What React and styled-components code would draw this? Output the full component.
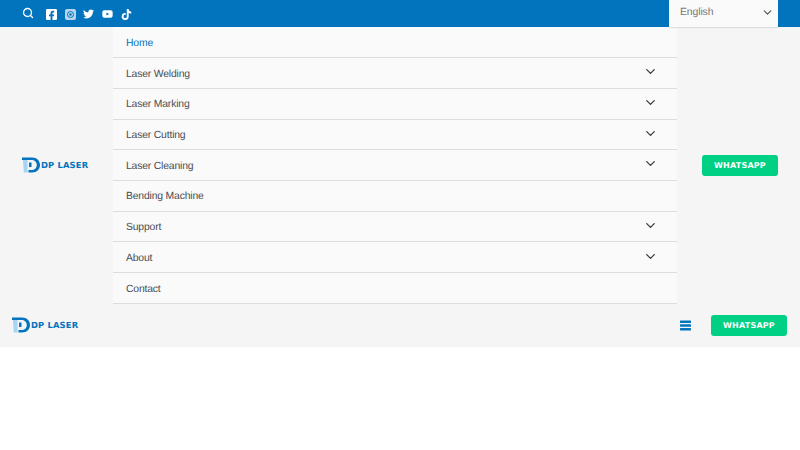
import React from "react";
import styled, { createGlobalStyle } from "styled-components";
import { ChevronDown, Search } from "lucide-react";
import { FaTwitter, FaYoutube, FaTiktok, FaFacebookSquare } from "react-icons/fa";

const Global = createGlobalStyle`
  html, body { margin: 0; padding: 0; background: #fff; }
  body { font-family: "Liberation Sans", Arial, sans-serif; overflow: hidden; text-rendering: geometricPrecision; }
  * { box-sizing: border-box; }
`;
const TopBar = styled.div`
  height: 27px; background: #0274be; display: flex; align-items: center;
  padding: 0 22px; color: #fff; position: relative;
`;
const Icons = styled.div`
  display: flex; align-items: center; gap: 7.7px; margin-left: 12px; height: 100%; padding-top: 1px;
`;
const IconBox = styled.span`
  display: flex; width: 11px; height: 11px; align-items: center; justify-content: center;
`;
const SearchBox = styled.span`display: flex; margin-top: -2px;`;
const Lang = styled.div`
  margin-left: auto; width: 109px; height: 27px; background: #fafafa; display: flex; align-items: center;
  justify-content: space-between; padding: 0 4.5px 3px 11px; font-size: 10.4px; letter-spacing: -.1px; color: #777;
  box-shadow: 0 1px 1px rgba(0,0,0,.1);
`;
const Header = styled.div`
  height: 276px; background: #f5f5f5; display: flex; align-items: center; padding: 0 22px;
`;
const Menu = styled.nav`
  width: 564px; margin: 0.4px 25px 0 23px; align-self: flex-start; background: #fafafa; display: flex; flex-direction: column;
`;
const Item = styled.div`
  height: 30.72px; border-bottom: 1px solid #ddd; display: flex; align-items: center; justify-content: space-between;
  padding: 2.2px 19px 0 13px; font-size: 10.4px; letter-spacing: -.18px; color: ${p => p.$active ? "#0274be" : "#4a4e55"};
`;
const Chevron = styled(ChevronDown)`margin-top: -4.5px; color: #3a3f45;`;
const Green = styled.div`
  width: 76px; height: 21px; border-radius: 3px; background: #00d084; color: #fff; display: flex; align-items: center; justify-content: center;
  font: 700 8px "DejaVu Sans", sans-serif; letter-spacing: 0.2px; flex: none;
`;
const MobileBar = styled.div`
  height: 44px; background: #f5f5f5; display: flex; align-items: center; padding: 0 13px 0 12px;
`;
const BurgerIcon = styled.svg`margin-left: auto; margin-right: 20px; flex: none;`;
const LogoWrap = styled.div`
  display: flex; align-items: center; gap: 1px; width: 68px; flex: none; color: #0274be;
`;
const LogoText = styled.span`
  font: 700 8.4px "DejaVu Sans", sans-serif; white-space: nowrap; letter-spacing: .15px;
`;
const Logo = () => (
  <LogoWrap>
    <svg width="18" height="16" viewBox="0 0 18 16">
      <path d="M0 0.5H10C15 0.5 18 4 18 8C18 12 15 15.5 10 15.5H6.5V13H9.5C12.5 13 14.8 11 14.8 8C14.8 5 12.5 3 9.5 3H0Z" fill="#0274be"/>
      <path d="M1 3H5.5V15.5H1.8Z" fill="#a6d4f2"/>
      <path d="M7 5.5H9.5V10H7Z" fill="#0274be"/>
    </svg>
    <LogoText>DP LASER</LogoText>
  </LogoWrap>
);
const Burger = () => (
  <BurgerIcon width="11" height="11" viewBox="0 0 11 11" fill="#0274be">
    <rect y="0.5" width="11" height="2.4" rx=".5"/>
    <rect y="4.3" width="11" height="2.4" rx=".5"/>
    <rect y="8.1" width="11" height="2.4" rx=".5"/>
  </BurgerIcon>
);
const items = [["Home",0,1],["Laser Welding",1],["Laser Marking",1],["Laser Cutting",1],["Laser Cleaning",1],["Bending Machine",0],["Support",1],["About",1],["Contact",0]];
export default function App() {
  return (
    <>
      <Global />
      <TopBar>
        <SearchBox><Search size={12} strokeWidth={2.6} /></SearchBox>
        <Icons>
          <IconBox><FaFacebookSquare size={13} /></IconBox>
          <IconBox>
            <svg width="11" height="11" viewBox="0 0 11 11"><rect width="11" height="11" rx="2" fill="#b5d6ec"/><circle cx="5.5" cy="5.5" r="3" fill="none" stroke="#0274be" strokeWidth="1"/><circle cx="5.5" cy="5.5" r="1.2" fill="#0274be"/></svg>
          </IconBox>
          <IconBox><FaTwitter size={12} /></IconBox>
          <IconBox><FaYoutube size={12} /></IconBox>
          <IconBox><FaTiktok size={11} /></IconBox>
        </Icons>
        <Lang>English <ChevronDown size={13} color="#555" strokeWidth={2.2} /></Lang>
      </TopBar>
      <Header>
        <Logo />
        <Menu>
          {items.map(([t, c, a]) => (
            <Item key={t} $active={a}>{t}{c ? <Chevron size={15} strokeWidth={2.2} /> : null}</Item>
          ))}
        </Menu>
        <Green>WHATSAPP</Green>
      </Header>
      <MobileBar>
        <Logo />
        <Burger />
        <Green>WHATSAPP</Green>
      </MobileBar>
    </>
  );
}
